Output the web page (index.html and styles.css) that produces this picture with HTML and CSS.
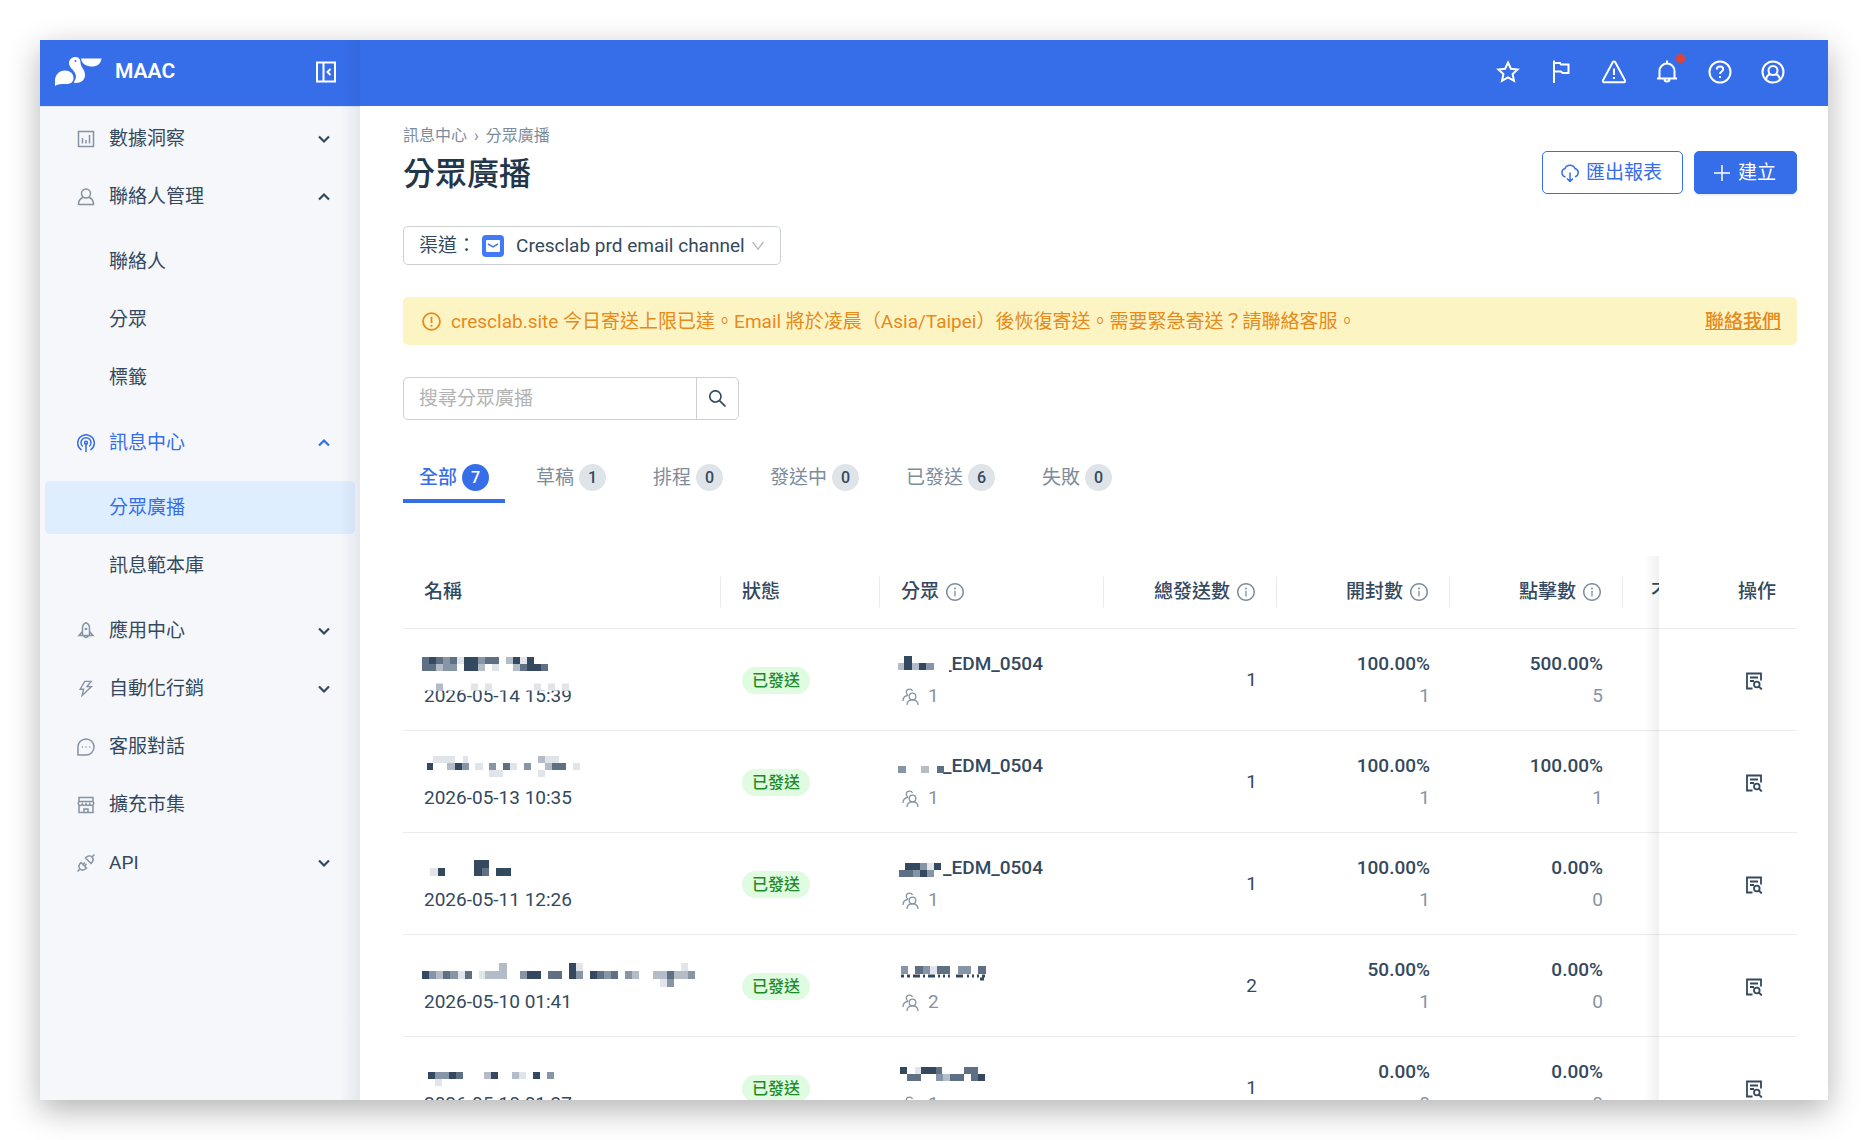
FILE: index.html
```html
<!DOCTYPE html>
<html lang="zh-Hant">
<head>
    <meta charset="UTF-8">
    <meta name="viewport" content="width=device-width, initial-scale=1.0">
    <title>MAAC - 分眾廣播</title>
    <link rel="stylesheet" href="styles.css">
</head>
<body>

    <!-- shared icons -->
    <svg class="sprite" width="0" height="0" aria-hidden="true">
        <symbol id="chevron" viewBox="0 0 14 14"><path d="M2 4.500l5 5 5-5" fill="none" stroke="currentColor" stroke-width="2.200"/></symbol>
        <symbol id="info" viewBox="64 64 896 896"><path d="M512 64C264.600 64 64 264.600 64 512s200.600 448 448 448 448-200.600 448-448S759.400 64 512 64zm0 820c-205.400 0-372-166.600-372-372s166.600-372 372-372 372 166.600 372 372-166.600 372-372 372z"/><path d="M464 336a48 48 0 1 0 96 0 48 48 0 1 0-96 0zm72 112h-48c-4.400 0-8 3.600-8 8v272c0 4.400 3.600 8 8 8h48c4.400 0 8-3.600 8-8V456c0-4.400-3.600-8-8-8z"/></symbol>
        <symbol id="people" viewBox="0 0 18 18"><g fill="none" stroke="currentColor" stroke-width="1.300"><circle cx="10.500" cy="8.500" r="3.300"/><path d="M5 17c0-3 2-5.200 5.500-5.200S16 14 16 17M10.500 3C10 1.600 8.800 1.200 7.500 1.200 5.300 1.200 4.300 2.800 4.300 4.300c0 1.400.7 2.400 1.900 3M1 13c0-3 1.500-5 4.500-5.500"/></g></symbol>
        <symbol id="report" viewBox="0 0 18 18"><g fill="none" stroke="currentColor" stroke-width="1.800"><path d="M7.500 16.500H2V1.500h14v7M5 5.500h8M5 9h4"/><circle cx="11.800" cy="12.500" r="2.800"/><path d="M13.800 14.500l3 3"/></g></symbol>
    </svg>

    <div class="window">
        <aside class="sidebar">
            <div class="brand">
                <svg class="logo" viewBox="0 0 47 29" aria-hidden="true">
                    <path fill="#fff" d="M0 29v-5c0-6 4-10.500 10-10.500 5 0 8.300 3 8.500 7 .2 4.500-3 6.500-7 6.500-5 0-9 0-11.500 2zM14 6c0-3.500 3-6 6.300-6C24 0 25.500 2.500 25.500 5.500c0 4.500 4.500 7 4.500 12.500 0 5-4 8-9.500 8-2 0-2-1-1-2 2-2.500 1.800-5.500.5-8C18 12.500 14 10 14 6zM26 1.500h20.500C46 7 42 9.500 37 9.500S27 7.500 26 1.500z"/>
                    <circle cx="20.500" cy="4" r="1" fill="#366eea"/>
                </svg>
                <span class="brand-name">MAAC</span>
                <button class="icon-btn collapse" aria-label="收合選單">
                    <svg viewBox="0 0 22 22"><path d="M2 1.500h18v19H2zM8.500 1.500v19" fill="none" stroke="currentColor" stroke-width="2"/><path d="M15.500 8l-3 3 3 3" fill="none" stroke="currentColor" stroke-width="2"/></svg>
                </button>
            </div>

            <nav>
                <ul class="menu">
                    <li><a class="item" href="#"><svg class="item-icon" viewBox="0 0 18 18"><path d="M1.500 1.500h15v15h-15zM5.500 8v5.500M9 10v3.500M12.500 5v8.500"/></svg>數據洞察<svg class="arrow"><use href="#chevron"/></svg></a></li>
                    <li>
                        <a class="item" href="#"><svg class="item-icon" viewBox="0 0 18 18"><circle cx="9" cy="5.500" r="4.500"/><path d="M6 9.500c-3 1-4.500 3.300-4.500 7h15c0-3.700-1.500-6-4.500-7"/></svg>聯絡人管理<svg class="arrow up"><use href="#chevron"/></svg></a>
                        <ul class="submenu">
                            <li><a class="item" href="#">聯絡人</a></li>
                            <li><a class="item" href="#">分眾</a></li>
                            <li><a class="item" href="#">標籤</a></li>
                        </ul>
                    </li>
                    <li>
                        <a class="item active" href="#"><svg class="item-icon" viewBox="0 0 18 18"><path d="M4.500 16A8.300 8.300 0 1 1 13.500 16M5.700 12.500a5 5 0 1 1 6.600 0M9 9v9"/><circle cx="9" cy="8.700" r="1.500"/></svg>訊息中心<svg class="arrow up"><use href="#chevron"/></svg></a>
                        <ul class="submenu">
                            <li><a class="item selected" href="#">分眾廣播</a></li>
                            <li><a class="item" href="#">訊息範本庫</a></li>
                        </ul>
                    </li>
                    <li><a class="item" href="#"><svg class="item-icon" viewBox="0 0 18 18"><path d="M5.500 13.500V6C5.500 3.500 7 1.500 9 .8c2 .7 3.500 2.700 3.500 5.200v7.500zM5.500 9.500l-3.500 4h3.500M12.500 9.500l3.500 4h-3.500M6.500 13.500a2.600 2.600 0 0 0 5 0"/><circle cx="9" cy="7" r=".6"/></svg>應用中心<svg class="arrow"><use href="#chevron"/></svg></a></li>
                    <li><a class="item" href="#"><svg class="item-icon solid" viewBox="64 64 896 896"><path d="M848 359.300H627.700L825.800 109c4.100-5.300.4-13-6.300-13H436c-2.800 0-5.500 1.500-6.900 4L170 547.500c-3.100 5.300.7 12 6.900 12h174.400l-89.400 357.600c-1.900 7.800 7.500 13.300 13.300 7.700L853.500 373c5.200-4.900 1.700-13.700-5.500-13.700zM378.200 732.500l60.300-241H281.100l189.600-327.400h224.600L487 427.400h211L378.200 732.500z"/></svg>自動化行銷<svg class="arrow"><use href="#chevron"/></svg></a></li>
                    <li><a class="item" href="#"><svg class="item-icon" viewBox="0 0 18 18"><path d="M1 17V9a8 8 0 1 1 8 8zM4.800 9h1M8.500 9h1M12.200 9h1"/></svg>客服對話</a></li>
                    <li><a class="item" href="#"><svg class="item-icon" viewBox="0 0 18 18"><path d="M2 1.500h14V6l.8 1c0 3-3.300 3-4 1-.8 2-3 2-3.800 0-.8 2-3 2-3.800 0-.8 2-4 2-4-1l.8-1zM2 5.500h14M2 9v7.500h14V9M7 16.500V13h4v3.500"/></svg>擴充市集</a></li>
                    <li><a class="item" href="#"><svg class="item-icon" viewBox="0 0 18 18"><path d="M.5 17.500L3 15M17.500.5L15 3M4 8.500l5.500 5.500c-2 2-4.500 3-6.500 1s-1-4.500 1-6.500zM8.500 4L14 9.500c2-2 3-4.500 1-6.500s-4.500-1-6.500 1zM6 10.500l2-2M7.500 12l2-2"/></svg>API<svg class="arrow"><use href="#chevron"/></svg></a></li>
                </ul>
            </nav>
        </aside>

        <main class="main">
            <header class="topbar">
                <button class="icon-btn" aria-label="收藏"><svg viewBox="0 0 24 24"><path class="line" d="M12 2.500l2.900 6.200 6.700.8-5 4.600 1.400 6.700-6-3.400-6 3.400 1.400-6.700-5-4.600 6.700-.8z"/></svg></button>
                <button class="icon-btn" aria-label="旗標"><svg viewBox="0 0 24 24"><path class="line" d="M5 .5v22.500M5 3h6l1 1.500h7.500v8.500h-6L12 11.500H5"/></svg></button>
                <button class="icon-btn" aria-label="警告"><svg viewBox="0 0 24 24"><path class="line" d="M12 1.500c.6 0 1 .3 1.300.8l9.700 18c.4 1 0 2-1 2H2c-1 0-1.400-1-1-2l9.700-18c.3-.5.700-.8 1.300-.8zM12 8.500v6.500M12 17v2"/></svg></button>
                <button class="icon-btn" aria-label="通知"><svg viewBox="0 0 24 24"><path class="line" d="M2 18.500h20M4.500 18.500V11a7.500 7.500 0 0 1 15 0v7.500M12 .5v3M9.500 19a2.500 2.500 0 0 0 5 0"/></svg><span class="dot"></span></button>
                <button class="icon-btn" aria-label="說明"><svg viewBox="0 0 24 24"><circle class="line" cx="12" cy="12" r="10.500"/><path class="line" d="M8.800 9.500C8.800 7.500 10 6.500 12 6.500s3.200 1.200 3.200 2.800c0 2.200-3.200 2.200-3.200 4.700M12 16v2"/></svg></button>
                <button class="icon-btn" aria-label="帳號"><svg viewBox="0 0 24 24"><circle class="line" cx="12" cy="12" r="10.500"/><circle class="line" cx="12" cy="10.500" r="4.500"/><path class="line" d="M5 19.500c.5-3 2-4.800 4.500-5.500M19 19.500c-.5-3-2-4.800-4.500-5.500"/></svg></button>
            </header>

            <div class="content">
                <div class="page-head">
                    <div>
                        <div class="breadcrumb"><a href="#">訊息中心</a><span>›</span><a href="#">分眾廣播</a></div>
                        <h1>分眾廣播</h1>
                    </div>
                    <div class="actions">
                        <button class="btn"><svg viewBox="0 0 18 18"><path d="M4.500 13C2.500 12.500 1 11 1 8.500 1 6.500 2 5 4 4.500 4.800 2.500 6.500 1.200 9 1.200s4.200 1.300 5 3.300c2 .5 3.200 2 3.200 4 0 2.300-1.200 3.800-3.200 4.300M9 8.500v9M6 14.500l3 3 3-3"/></svg>匯出報表</button>
                        <button class="btn primary"><svg viewBox="0 0 18 18"><path d="M9 1v16M1 9h16"/></svg>建立</button>
                    </div>
                </div>

                <div class="channel">
                    <label for="channel">渠道：</label>
                    <svg class="mail" viewBox="0 0 22 22"><rect width="22" height="22" rx="4" fill="#4279f5"/><rect x="4" y="5" width="14" height="12" rx="1" fill="#fff"/><path d="M6 9l5 3 5-3" fill="none" stroke="#4279f5" stroke-width="1.500"/></svg>
                    <select id="channel">
                        <option>Cresclab prd email channel</option>
                    </select>
                    <svg class="caret" viewBox="64 64 896 896"><path d="M884 256h-75c-5.100 0-9.900 2.500-12.900 6.600L512 654.200 227.900 262.600c-3-4.100-7.800-6.600-12.900-6.600h-75c-6.500 0-10.300 7.400-6.500 12.700l352.600 486.100c12.800 17.600 39 17.600 51.700 0l352.600-486.100c3.900-5.300.1-12.700-6.400-12.700z"/></svg>
                </div>

                <div class="alert">
                    <svg viewBox="0 0 18 18"><circle cx="9" cy="9" r="8"/><path d="M9 4.500v6M9 12v2"/></svg>
                    <span>cresclab.site 今日寄送上限已達。Email 將於凌晨（Asia/Taipei）後恢復寄送。需要緊急寄送？請聯絡客服。</span>
                    <a href="#">聯絡我們</a>
                </div>

                <div class="search">
                    <input type="text" placeholder="搜尋分眾廣播" aria-label="搜尋分眾廣播">
                    <button aria-label="搜尋"><svg viewBox="64 64 896 896"><path d="M909.600 854.500L649.900 594.800C690.200 542.700 712 479 712 412c0-80.200-31.300-155.400-87.900-212.100-56.600-56.700-132-87.900-212.100-87.900s-155.500 31.300-212.100 87.900C143.200 256.500 112 331.800 112 412c0 80.100 31.300 155.500 87.900 212.100C256.500 680.800 331.800 712 412 712c67 0 130.600-21.800 182.700-62l259.700 259.600a8.200 8.200 0 0 0 11.600 0l43.600-43.500a8.200 8.200 0 0 0 0-11.600zM570.400 570.400C528 612.700 471.800 636 412 636s-116-23.300-158.400-65.600C211.300 528 188 471.800 188 412s23.300-116.100 65.600-158.400C296 211.300 352.200 188 412 188s116.100 23.200 158.400 65.600S636 352.200 636 412s-23.300 116.100-65.600 158.400z"/></svg></button>
                </div>

                <div class="tabs">
                    <button class="tab current">全部<span class="count">7</span></button>
                    <button class="tab">草稿<span class="count">1</span></button>
                    <button class="tab">排程<span class="count">0</span></button>
                    <button class="tab">發送中<span class="count">0</span></button>
                    <button class="tab">已發送<span class="count">6</span></button>
                    <button class="tab">失敗<span class="count">0</span></button>
                </div>

                <div class="table-wrap">
                    <table>
                        <colgroup>
                            <col class="col-name"><col class="col-status"><col class="col-segment"><col class="col-num"><col class="col-num"><col class="col-num"><col class="col-num"><col class="col-action">
                        </colgroup>
                        <thead>
                            <tr>
                                <th>名稱</th>
                                <th>狀態</th>
                                <th>分眾<svg class="info"><use href="#info"/></svg></th>
                                <th class="num">總發送數<svg class="info"><use href="#info"/></svg></th>
                                <th class="num">開封數<svg class="info"><use href="#info"/></svg></th>
                                <th class="num">點擊數<svg class="info"><use href="#info"/></svg></th>
                                <th class="more">不</th>
                                <th class="fixed">操作</th>
                            </tr>
                        </thead>
                        <tbody>
                            <tr>
                                <td>
                                    <div class="line-1"><svg class="mosaic" width="160" height="27"><path class="cover" d="M0 37h150"/><path class="s1" d="M8 10.500h7M43 10.500h14M92 10.500h7M106 10.500h7M43 17.500h14M106 17.500h14"/><path class="s2" d="M1 10.500h7M15 10.500h7M29 10.500h7M64 10.500h14M1 17.500h14M99 17.500h7M120 17.500h7"/><path class="s3" d="M22 10.500h7M57 10.500h7M22 17.500h14"/><path class="s4" d="M85 10.500h7M15 17.500h7M57 17.500h7M92 17.500h7M15 37h7"/><path class="s5" d="M36 10.500h7M99 10.500h7M71 17.500h7M50 37h7M64 37h7M113 37h7M127 37h7M141 37h7"/></svg></div>
                                    <div class="line-2 date">2026-05-14 15:39</div>
                                </td>
                                <td><span class="tag">已發送</span></td>
                                <td>
                                    <div class="line-1"><svg class="mosaic" width="45" height="27"><path class="cover" d="M43 21h8"/><path class="s1" d="M6 9.500h8M6 16.500h8M21 16.500h7"/><path class="s3" d="M28 16.500h8"/><path class="s4" d="M0 16.500h6M14 16.500h7"/></svg>_EDM_0504</div>
                                    <div class="line-2"><svg class="people"><use href="#people"/></svg>1</div>
                                </td>
                                <td class="num">1</td>
                                <td class="num"><div class="line-1">100.00%</div><div class="line-2">1</div></td>
                                <td class="num"><div class="line-1">500.00%</div><div class="line-2">5</div></td>
                                <td></td>
                                <td class="fixed"><button class="report" aria-label="查看報告"><svg><use href="#report"/></svg></button></td>
                            </tr>
                            <tr>
                                <td>
                                    <div class="line-1"><svg class="mosaic" width="160" height="27"><path class="s1" d="M6 14.500h6M34 14.500h7"/><path class="s2" d="M82 14.500h7M131 14.500h14"/><path class="s3" d="M41 14.500h7M68 14.500h7M103 14.500h7"/><path class="s4" d="M26 14.500h8M117 7.500h7M124 14.500h7"/><path class="s5" d="M12 7.500h22M42 7.500h5M54 14.500h8M124 7.500h14M89 14.500h7M152 14.500h7M68 21.500h14M117 21.500h7"/></svg></div>
                                    <div class="line-2 date">2026-05-13 10:35</div>
                                </td>
                                <td><span class="tag">已發送</span></td>
                                <td>
                                    <div class="line-1"><svg class="mosaic" width="45" height="27"><path class="s2" d="M39 17.500h7"/><path class="s3" d="M0 17.500h8"/><path class="s4" d="M23 17.500h8"/></svg>_EDM_0504</div>
                                    <div class="line-2"><svg class="people"><use href="#people"/></svg>1</div>
                                </td>
                                <td class="num">1</td>
                                <td class="num"><div class="line-1">100.00%</div><div class="line-2">1</div></td>
                                <td class="num"><div class="line-1">100.00%</div><div class="line-2">1</div></td>
                                <td></td>
                                <td class="fixed"><button class="report" aria-label="查看報告"><svg><use href="#report"/></svg></button></td>
                            </tr>
                            <tr>
                                <td>
                                    <div class="line-1"><svg class="mosaic tall" width="160" height="27"><path class="s1" d="M53 10h15M53 18h8M17 18h7M75 18h15"/><path class="s2" d="M61 18h7"/><path class="s5" d="M9 18h8"/></svg></div>
                                    <div class="line-2 date">2026-05-11 12:26</div>
                                </td>
                                <td><span class="tag">已發送</span></td>
                                <td>
                                    <div class="line-1"><svg class="mosaic" width="45" height="27"><path class="s1" d="M7 12.500h15M36 12.500h7M22 19.500h7"/><path class="s2" d="M1 19.500h14"/><path class="s3" d="M22 12.500h7M15 19.500h7M29 19.500h7"/><path class="s5" d="M29 12.500h7"/></svg>_EDM_0504</div>
                                    <div class="line-2"><svg class="people"><use href="#people"/></svg>1</div>
                                </td>
                                <td class="num">1</td>
                                <td class="num"><div class="line-1">100.00%</div><div class="line-2">1</div></td>
                                <td class="num"><div class="line-1">0.00%</div><div class="line-2">0</div></td>
                                <td></td>
                                <td class="fixed"><button class="report" aria-label="查看報告"><svg><use href="#report"/></svg></button></td>
                            </tr>
                            <tr>
                                <td>
                                    <div class="line-1"><svg class="mosaic tall" width="275" height="27"><path class="s1" d="M1 19h7M106 19h14M148 11h7M148 19h7M169 19h7"/><path class="s2" d="M22 19h7M44 19h7M127 19h14M176 19h7M190 19h7M246 19h7"/><path class="s3" d="M8 19h7M29 19h8M99 19h7M155 19h7M183 19h7M204 19h7M267 19h7M246 27h7"/><path class="s4" d="M15 19h7M64 19h22M78 11h8M211 19h7M232 19h14M253 19h14"/><path class="s5" d="M37 19h7M58 19h6M155 11h7M260 11h7M239 27h7"/></svg></div>
                                    <div class="line-2 date">2026-05-10 01:41</div>
                                </td>
                                <td><span class="tag">已發送</span></td>
                                <td>
                                    <div class="line-1"><svg class="mosaic tall" width="90" height="27"><path class="s2" d="M17 14h8M39 14h13M80 14h8"/><path class="s3" d="M3 14h7M25 14h7M60 14h13"/><path class="s5" d="M32 14h7"/><path class="bits" d="M3 20h3M9 20h3M15 20h7M25 20h2M30 20h7M40 20h2M45 20h2M50 20h2M58 20h7M69 20h2M74 20h2M79 20h2M84 20h3M82 23h4"/></svg></div>
                                    <div class="line-2"><svg class="people"><use href="#people"/></svg>2</div>
                                </td>
                                <td class="num">2</td>
                                <td class="num"><div class="line-1">50.00%</div><div class="line-2">1</div></td>
                                <td class="num"><div class="line-1">0.00%</div><div class="line-2">0</div></td>
                                <td></td>
                                <td class="fixed"><button class="report" aria-label="查看報告"><svg><use href="#report"/></svg></button></td>
                            </tr>
                            <tr>
                                <td>
                                    <div class="line-1"><svg class="mosaic" width="160" height="27"><path class="s1" d="M7 17.500h7M28 17.500h7M70 17.500h7M112 17.500h7"/><path class="s2" d="M35 17.500h7"/><path class="s3" d="M14 17.500h14M126 17.500h7"/><path class="s4" d="M63 17.500h7M91 17.500h7"/><path class="s5" d="M98 17.500h7M14 24.500h7"/></svg></div>
                                    <div class="line-2 date">2026-05-10 01:37</div>
                                </td>
                                <td><span class="tag">已發送</span></td>
                                <td>
                                    <div class="line-1"><svg class="mosaic" width="90" height="27"><path class="s1" d="M2 12.500h7M23 12.500h15M80 19.500h7"/><path class="s2" d="M38 12.500h6M66 12.500h14M9 19.500h14M52 19.500h14M73 19.500h7"/><path class="s3" d="M38 19.500h7"/><path class="s4" d="M45 19.500h7"/><path class="s5" d="M17 12.500h6"/></svg></div>
                                    <div class="line-2"><svg class="people"><use href="#people"/></svg>1</div>
                                </td>
                                <td class="num">1</td>
                                <td class="num"><div class="line-1">0.00%</div><div class="line-2">0</div></td>
                                <td class="num"><div class="line-1">0.00%</div><div class="line-2">0</div></td>
                                <td></td>
                                <td class="fixed"><button class="report" aria-label="查看報告"><svg><use href="#report"/></svg></button></td>
                            </tr>
                        </tbody>
                    </table>
                </div>
            </div>
        </main>
    </div>

</body>
</html>
```

FILE: styles.css
```css
* {
    box-sizing: border-box;
}
body {
    margin: 0;
    padding: 40px;
    height: 100vh;
    overflow: hidden;
    background: #fff;
    color: #34495e;
    font-family: Roboto, "Noto Sans CJK TC", sans-serif;
    font-size: 19px;
    line-height: 27px;
}
button, input, select {
    font: inherit;
    color: inherit;
}
button {
    padding: 0;
    border: 0;
    background: none;
    cursor: pointer;
}
a {
    color: inherit;
    text-decoration: none;
}
svg {
    flex: none;
    fill: currentColor;
}
.sprite {
    position: absolute;
}
.window {
    display: grid;
    grid-template-columns: 320px minmax(0, 1fr);
    height: 100%;
    overflow: hidden;
    background: #fff;
    box-shadow: 0 10px 30px rgba(0,0,0,0.3);
}


/* sidebar */
.sidebar {
    position: relative;
    background: #f5f7fb;
}
.sidebar::after {
    content: "";
    position: absolute;
    top: 0;
    right: 0;
    bottom: 0;
    width: 20px;
    background: linear-gradient(to right, rgba(20,30,70,0), rgba(20,30,70,0.07));
    pointer-events: none;
}
.brand {
    display: flex;
    align-items: center;
    height: 66px;
    padding: 0 23px 3px 15px;
    background: #366eea;
    color: #fff;
}
.logo {
    width: 47px;
    height: 29px;
    margin-right: 13px;
}
.brand-name {
    font-size: 21px;
    font-weight: 600;
}
.collapse {
    margin-left: auto;
}
.menu, .submenu {
    margin: 0;
    padding: 0;
    list-style: none;
}
.menu {
    padding: 5px;
    border-top: 1px solid #dfe5ef;
}
.submenu {
    padding: 7px 0;
}
.submenu .item {
    padding-left: 64px;
}
.item {
    display: flex;
    align-items: center;
    height: 53px;
    margin-bottom: 5px;
    padding: 0 24px 0 32px;
    border-radius: 5px;
}
.item-icon {
    width: 18px;
    height: 18px;
    margin-right: 14px;
    fill: none;
    stroke: #8593a3;
    stroke-width: 1.5;
}
.item-icon.solid {
    fill: #8593a3;
    stroke: none;
}
.arrow {
    width: 14px;
    height: 14px;
    margin-left: auto;
}
.arrow.up {
    transform: rotate(180deg);
}
.active {
    color: #366eea;
}
.active .item-icon {
    stroke: #366eea;
}
.selected {
    background: #deeeff;
    color: #366eea;
}


/* top bar */
.main {
    overflow: hidden;
}
.topbar {
    display: flex;
    justify-content: flex-end;
    align-items: center;
    gap: 29px;
    height: 66px;
    padding: 0 43px 3px 0;
    background: #366eea;
    color: #fff;
}
.icon-btn {
    position: relative;
    height: 24px;
}
.icon-btn svg {
    display: block;
    width: 24px;
    height: 24px;
}
.collapse svg {
    width: 22px;
}
.line {
    fill: none;
    stroke: currentColor;
    stroke-width: 2;
}
.dot {
    position: absolute;
    top: -6px;
    right: -6px;
    width: 9px;
    height: 9px;
    border-radius: 50%;
    background: #dd4335;
}


/* page */
.content {
    padding: 18px 31px 0 43px;
}
.page-head {
    display: flex;
    justify-content: space-between;
    align-items: flex-end;
}
.breadcrumb {
    display: flex;
    gap: 7px;
    margin-bottom: 6px;
    color: #7d8c9c;
    font-size: 16px;
    line-height: 24px;
}
h1 {
    margin: 0;
    color: #22364b;
    font-size: 32px;
    font-weight: 500;
    line-height: 40px;
}
.actions {
    display: flex;
    gap: 11px;
}
.btn {
    display: flex;
    align-items: center;
    gap: 7px;
    height: 43px;
    padding: 0 20px 0 18px;
    border: 1px solid #366eea;
    border-radius: 5px;
    color: #366eea;
}
.btn svg {
    width: 18px;
    height: 18px;
    fill: none;
    stroke: currentColor;
    stroke-width: 1.5;
}
.btn.primary {
    background: #366eea;
    color: #fff;
    box-shadow: 0 2px 1px rgba(54,110,234,0.1);
}
.channel {
    display: flex;
    align-items: center;
    width: fit-content;
    height: 39px;
    margin-top: 32px;
    padding: 0 15px;
    border: 1px solid #ccd0d4;
    border-radius: 5px;
}
.mail {
    width: 22px;
    height: 22px;
    margin: 0 12px 0 6px;
}
.channel select {
    padding: 0;
    border: 0;
    background: none;
    appearance: none;
}
.caret {
    width: 14px;
    height: 14px;
    margin-left: 6px;
    color: #b0b4b8;
}
.alert {
    display: flex;
    align-items: center;
    height: 48px;
    margin-top: 32px;
    padding: 0 16px 0 19px;
    border-radius: 5px;
    background: #fdf4c4;
    color: #e58a1b;
}
.alert svg {
    width: 19px;
    height: 19px;
    margin-right: 10px;
    fill: none;
    stroke: currentColor;
    stroke-width: 1.7;
}
.alert a {
    margin-left: auto;
    text-decoration: underline;
    font-weight: 500;
}
.search {
    display: flex;
    width: 336px;
    height: 43px;
    margin-top: 32px;
    border: 1px solid #ccd0d4;
    border-radius: 5px;
}
.search input {
    flex: 1;
    min-width: 0;
    padding: 0 15px;
    border: 0;
    background: none;
    outline: none;
}
.search input::placeholder {
    color: #b3b3b3;
}
.search button {
    display: flex;
    align-items: center;
    justify-content: center;
    width: 42px;
    border-left: 1px solid #ccd0d4;
}
.search svg {
    width: 19px;
    height: 19px;
}
.tabs {
    display: flex;
    gap: 15px;
    margin-top: 32px;
}
.tab {
    display: flex;
    align-items: center;
    gap: 5px;
    padding: 12px 16px 8px;
    border-bottom: 4px solid transparent;
    color: #7d8c9c;
}
.count {
    min-width: 27px;
    border-radius: 14px;
    background: #dfe4e9;
    color: #34495e;
    font-size: 16px;
    font-weight: 500;
    text-align: center;
}
.tab.current {
    border-color: #366eea;
    color: #366eea;
    font-weight: 500;
}
.current .count {
    background: #366eea;
    color: #fff;
}


/* broadcast table */
.table-wrap {
    margin-top: 53px;
    overflow: hidden;
}
table {
    width: 100%;
    min-width: 1531px;
    table-layout: fixed;
    border-collapse: separate;
    border-spacing: 0;
}
.col-name {
    width: 318px;
}
.col-status {
    width: 159px;
}
.col-segment {
    width: 224px;
}
.col-num {
    width: 173px;
}
.col-action {
    width: 138px;
}
th, td {
    padding: 0 21px;
    border-bottom: 1px solid #e9ebed;
    text-align: left;
    white-space: nowrap;
}
th {
    height: 73px;
    padding-bottom: 2px;
    background: linear-gradient(#e9ebed, #e9ebed) right center / 1px 30px no-repeat;
    font-weight: 500;
}
td {
    height: 102px;
}
.num {
    padding-right: 20px;
    text-align: right;
}
.more {
    padding-left: 28px;
    background: none;
}
.info {
    width: 18px;
    height: 18px;
    margin: 0 2px 0 7px;
    color: #7d8c9c;
    vertical-align: -3px;
}
.line-1 {
    height: 27px;
    font-weight: 500;
}
.line-2 {
    margin-top: 5px;
    color: #8593a3;
}
.date {
    color: #34495e;
}
.tag {
    display: inline-block;
    padding: 0 10px;
    border-radius: 14px;
    background: #dffbe0;
    color: #1f8a28;
    font-size: 16px;
    font-weight: 500;
}
.people {
    width: 18px;
    height: 18px;
    margin: 0 8px 0 1px;
    vertical-align: -4px;
}
.fixed {
    position: sticky;
    right: 0;
    background: #fff;
    text-align: right;
}
.fixed::before {
    content: "";
    position: absolute;
    top: 0;
    bottom: -1px;
    right: 100%;
    width: 14px;
    background: linear-gradient(to left, rgba(0,0,0,0.06), rgba(0,0,0,0));
}
.report {
    margin-right: 13px;
    vertical-align: middle;
}
.report svg {
    display: block;
    width: 18px;
    height: 18px;
}


/* pixelated names */
.mosaic {
    position: relative;
    margin-left: -3px;
    overflow: visible;
    vertical-align: top;
    stroke-width: 7;
}
.mosaic.tall {
    stroke-width: 8;
}
.cover {
    stroke: #fff;
}
.s1 {
    stroke: #34495f;
}
.s2 {
    stroke: #5f7084;
}
.s3 {
    stroke: #8796a6;
}
.s4 {
    stroke: #b4bcc7;
}
.s5 {
    stroke: #e1e5ea;
}
.bits {
    stroke: #34495f;
    stroke-width: 3;
}
```
